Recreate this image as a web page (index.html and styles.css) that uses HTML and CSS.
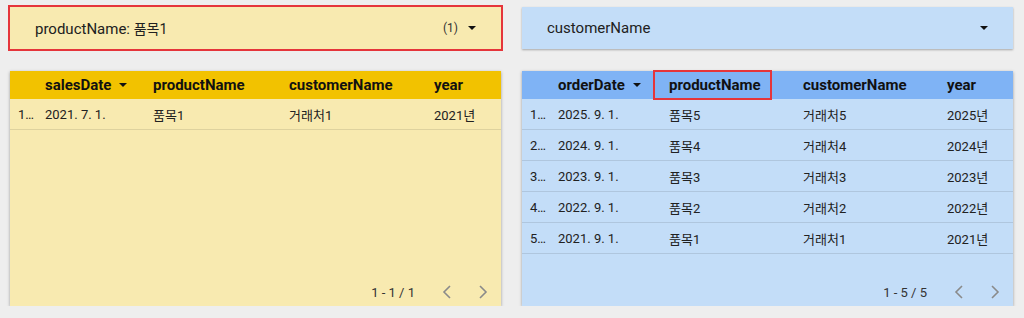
FILE: index.html
```html
<!DOCTYPE html>
<html lang="ko">
<head>
    <meta charset="UTF-8">
    <title>Sales Report</title>
    <link rel="stylesheet" href="styles.css">
</head>
<body>
    <div class="report">
        <div class="column">
            <div class="filter filter-yellow selected">
                <span class="filter-label">productName: <span class="filter-value">품목1</span></span>
                <span class="filter-count">(1)</span>
                <span class="caret"></span>
            </div>
            <div class="table table-yellow">
                <div class="row head">
                    <div class="cell"></div>
                    <div class="cell">salesDate <span class="caret"></span></div>
                    <div class="cell">productName</div>
                    <div class="cell">customerName</div>
                    <div class="cell">year</div>
                </div>
                <div class="row">
                    <div class="cell idx">1…</div>
                    <div class="cell">2021. 7. 1.</div>
                    <div class="cell">품목1</div>
                    <div class="cell">거래처1</div>
                    <div class="cell">2021년</div>
                </div>
                <div class="spacer"></div>
                <div class="pager">
                    <span class="pager-text">1 - 1 / 1</span>
                    <span class="chev"><svg width="10" height="16" viewBox="0 0 10 16"><path d="M8 2 L2 8 L8 14" /></svg></span>
                    <span class="chev"><svg width="10" height="16" viewBox="0 0 10 16"><path d="M2 2 L8 8 L2 14" /></svg></span>
                </div>
            </div>
        </div>

        <div class="column">
            <div class="filter filter-blue">
                <span class="filter-label">customerName</span>
                <span class="caret"></span>
            </div>
            <div class="table table-blue">
                <div class="row head">
                    <div class="cell"></div>
                    <div class="cell">orderDate <span class="caret"></span></div>
                    <div class="cell"><span class="highlight">productName</span></div>
                    <div class="cell">customerName</div>
                    <div class="cell">year</div>
                </div>
                <div class="row">
                    <div class="cell idx">1…</div>
                    <div class="cell">2025. 9. 1.</div>
                    <div class="cell">품목5</div>
                    <div class="cell">거래처5</div>
                    <div class="cell">2025년</div>
                </div>
                <div class="row">
                    <div class="cell idx">2…</div>
                    <div class="cell">2024. 9. 1.</div>
                    <div class="cell">품목4</div>
                    <div class="cell">거래처4</div>
                    <div class="cell">2024년</div>
                </div>
                <div class="row">
                    <div class="cell idx">3…</div>
                    <div class="cell">2023. 9. 1.</div>
                    <div class="cell">품목3</div>
                    <div class="cell">거래처3</div>
                    <div class="cell">2023년</div>
                </div>
                <div class="row">
                    <div class="cell idx">4…</div>
                    <div class="cell">2022. 9. 1.</div>
                    <div class="cell">품목2</div>
                    <div class="cell">거래처2</div>
                    <div class="cell">2022년</div>
                </div>
                <div class="row">
                    <div class="cell idx">5…</div>
                    <div class="cell">2021. 9. 1.</div>
                    <div class="cell">품목1</div>
                    <div class="cell">거래처1</div>
                    <div class="cell">2021년</div>
                </div>
                <div class="spacer"></div>
                <div class="pager">
                    <span class="pager-text">1 - 5 / 5</span>
                    <span class="chev"><svg width="10" height="16" viewBox="0 0 10 16"><path d="M8 2 L2 8 L8 14" /></svg></span>
                    <span class="chev"><svg width="10" height="16" viewBox="0 0 10 16"><path d="M2 2 L8 8 L2 14" /></svg></span>
                </div>
            </div>
        </div>
    </div>
</body>
</html>
```
FILE: styles.css
```css
body {
    margin: 0;
    background: #eeeeee;
    font-family: Roboto, "Noto Sans CJK KR", sans-serif;
    color: #212121;
}

.report {
    display: flex;
    gap: 21px;
    padding: 7px 10px 0 10px;
}

.column {
    width: 491px;
    display: flex;
    flex-direction: column;
    gap: 22px;
}

/* filter controls */
.filter {
    height: 42px;
    display: flex;
    align-items: center;
    padding: 0 25px 0 25px;
    box-sizing: border-box;
    box-shadow: 0 1px 2px rgba(0, 0, 0, 0.3);
}

.filter-yellow {
    background: #f8eab0;
}

.filter-blue {
    background: #c3ddf8;
}

.filter.selected {
    outline: 2px solid #e5353b;
    outline-offset: 0;
    box-shadow: none;
}

.filter-label {
    flex: 1;
    font-size: 15px;
    color: #212121;
}

.filter-value {
    font-size: 14px;
}

.filter-count {
    font-size: 12px;
    color: #333;
    margin-right: 10px;
}

.caret {
    display: inline-block;
    width: 0;
    height: 0;
    border-left: 4px solid transparent;
    border-right: 4px solid transparent;
    border-top: 4px solid #111;
    vertical-align: middle;
}

.head .caret {
    margin-left: 4px;
    margin-bottom: 2px;
}

/* tables */
.table {
    height: 235px;
    display: flex;
    flex-direction: column;
    box-shadow: 0 1px 3px rgba(0, 0, 0, 0.35);
}

.table-yellow {
    background: #f8eab0;
    --cols: 35px 108px 136px 145px 1fr;
}

.table-yellow .head {
    background: #f2c200;
}

.table-blue {
    background: #c3ddf8;
    --cols: 36px 111px 134px 144px 1fr;
}

.table-blue .head {
    background: #7fb3f5;
}

.row {
    display: grid;
    grid-template-columns: var(--cols);
    height: 31px;
    align-items: center;
    font-size: 13px;
    border-bottom: 1px solid rgba(0, 0, 0, 0.1);
    box-sizing: border-box;
}

.row.head {
    height: 28px;
    font-size: 15px;
    font-weight: 700;
    color: #111;
    border-bottom: none;
}

.cell {
    white-space: nowrap;
    overflow: hidden;
}

.cell.idx {
    padding-left: 8px;
}

.highlight {
    display: inline-block;
    margin-left: -15px;
    padding: 0 9px 0 14px;
    line-height: 26px;
    border: 1px solid #e5353b;
    box-shadow: 0 0 0 1px #e5353b;
}

.head .cell {
    overflow: visible;
}

.spacer {
    flex: 1;
}

.pager {
    height: 28px;
    display: flex;
    align-items: center;
    justify-content: flex-end;
    font-size: 13px;
    color: #333;
}

.pager-text {
    margin-right: 14px;
}

.chev {
    width: 36px;
    display: flex;
    justify-content: center;
}

.chev path {
    fill: none;
    stroke: #8a8a8a;
    stroke-width: 1.6;
}
```
